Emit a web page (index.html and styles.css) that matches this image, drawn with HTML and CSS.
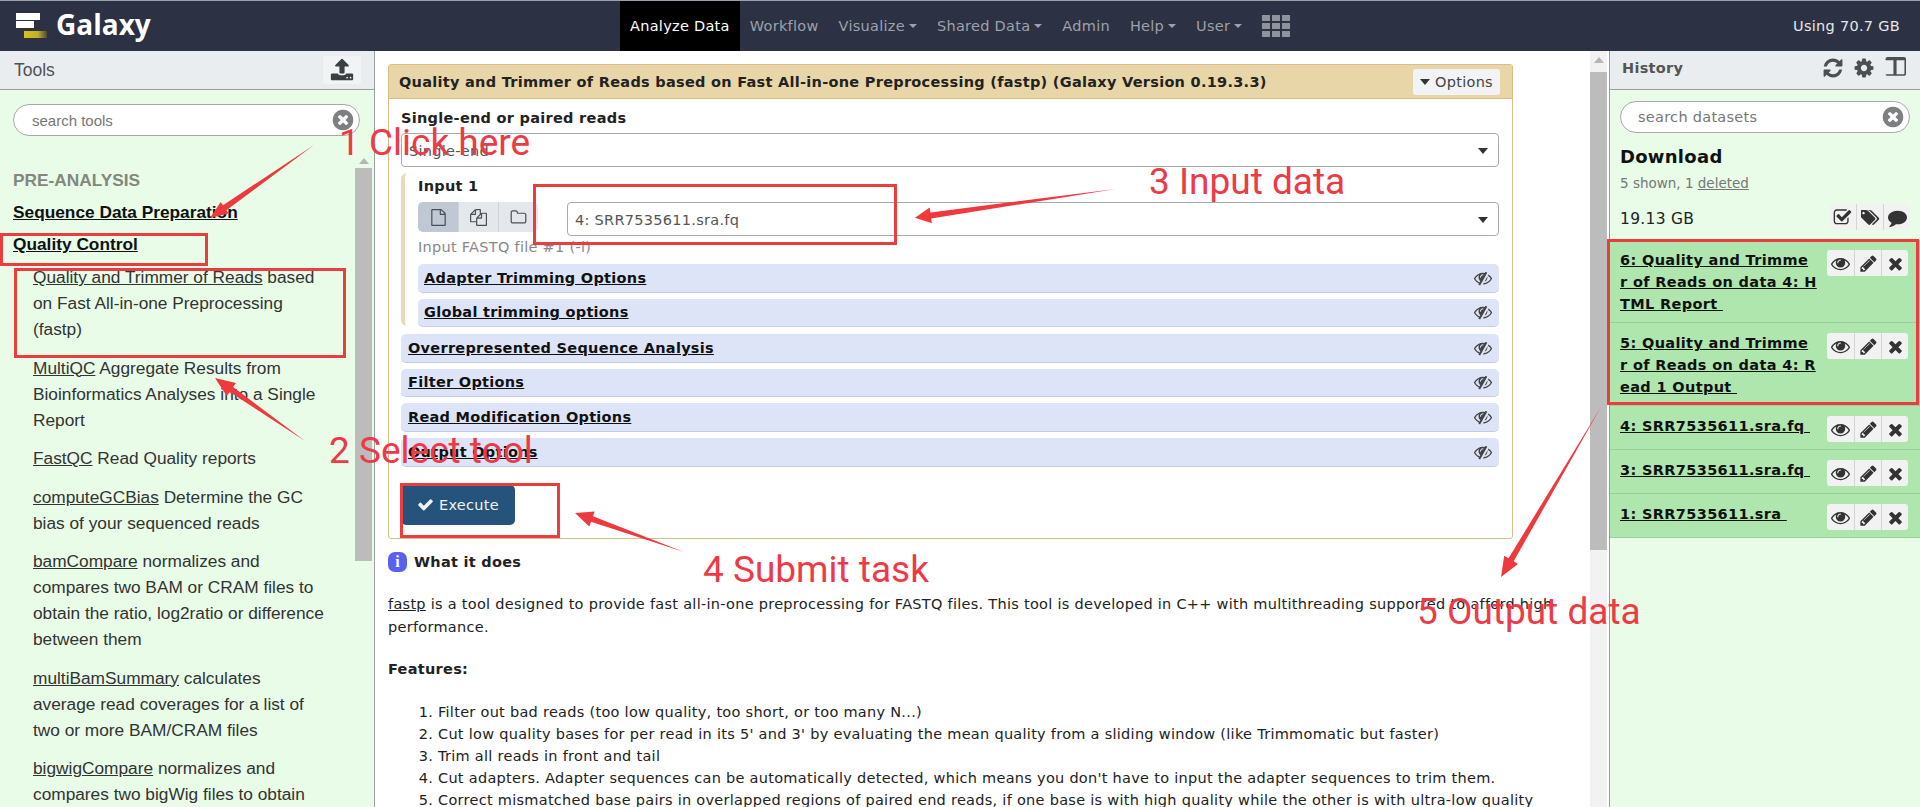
FILE: index.html
```html
<!DOCTYPE html>
<html lang="en">
<head>
<meta charset="utf-8">
<title>Galaxy</title>
<link rel="stylesheet" href="styles.css">
</head>
<body>
<svg class="sprite" width="0" height="0">
  <defs>
    <linearGradient id="gold-fade" x1="0" x2="1" y1="0" y2="0"><stop offset="0" stop-color="#d8c21c"/><stop offset="0.6" stop-color="#c2ae2a"/><stop offset="1" stop-color="#4a4a3a"/></linearGradient>
    <symbol id="i-times" viewBox="0 0 1792 1792"><path d="M1490 1322q0 40-28 68l-136 136q-28 28-68 28t-68-28l-294-294-294 294q-28 28-68 28t-68-28l-136-136q-28-28-28-68t28-68l294-294-294-294q-28-28-28-68t28-68l136-136q28-28 68-28t68 28l294 294 294-294q28-28 68-28t68 28l136 136q28 28 28 68t-28 68l-294 294 294 294q28 28 28 68z"/></symbol>
    <symbol id="i-check" viewBox="0 0 1792 1792"><path d="M1671 566q0 40-28 68l-724 724-136 136q-28 28-68 28t-68-28l-136-136-362-362q-28-28-28-68t28-68l136-136q28-28 68-28t68 28l294 295 656-657q28-28 68-28t68 28l136 136q28 28 28 68z"/></symbol>
    <symbol id="i-pencil" viewBox="0 0 1792 1792"><path d="M491 1536l91-91-235-235-91 91v107h128v128h107zm523-928q0-22-22-22-10 0-17 7l-542 542q-7 7-7 17 0 22 22 22 10 0 17-7l542-542q7-7 7-17zm-54-192l416 416-832 832h-416v-416zm683 96q0 53-37 90l-166 166-416-416 166-165q36-38 90-38 53 0 91 38l235 234q37 39 37 91z"/></symbol>
    <symbol id="i-eye" viewBox="0 0 1792 1792"><path d="M1664 960q-152-236-381-353 61 104 61 225 0 185-131.500 316.500t-316.500 131.500-316.500-131.500-131.500-316.500q0-121 61-225-229 117-381 353 133 205 333.500 326.500t434.500 121.500 434.500-121.500 333.500-326.500zm-720-384q0-20-14-34t-34-14q-125 0-214.500 89.500t-89.500 214.500q0 20 14 34t34 14 34-14 14-34q0-86 61-147t147-61q20 0 34-14t14-34zm848 384q0 34-20 69-140 230-376.500 368.500t-499.500 138.500-499.500-139-376.500-368q-20-35-20-69t20-69q140-229 376.500-368t499.500-139 499.500 139 376.500 368q20 35 20 69z"/></symbol>
    <symbol id="i-eye-slash" viewBox="0 0 1792 1792"><path d="M555 1335l78-141q-87-63-136-159t-49-203q0-121 61-225-229 117-381 353 167 258 427 375zm389-759q0-20-14-34t-34-14q-125 0-214.500 89.500t-89.500 214.500q0 20 14 34t34 14 34-14 14-34q0-86 61-147t147-61q20 0 34-14t14-34zm363-191q0 7-1 9-106 189-316 567t-315 566l-49 89q-10 16-28 16-12 0-134-70-16-10-16-28 0-12 44-87-143-65-263.500-173t-208.500-245q-20-31-20-69t20-69q153-235 380-371t496-136q89 0 180 17l54-97q10-16 28-16 5 0 18 6t31 15.500 33 18.500 31.500 18.500 19.500 11.500q16 10 16 27zm37 447q0 139-79 253.500t-209 164.500l280-502q8 45 8 84zm448 128q0 35-20 69-39 64-109 145-150 172-347.500 267t-419.500 95l74-132q212-18 392.500-137t301.500-307q-115-179-282-294l63-112q95 64 182.500 153t144.500 184q20 34 20 69z"/></symbol>
    <symbol id="i-cog" viewBox="0 0 1792 1792"><path d="M1152 896q0-106-75-181t-181-75-181 75-75 181 75 181 181 75 181-75 75-181zm512-109v222q0 12-8 23t-20 13l-185 28q-19 54-39 91 35 50 107 138 10 12 10 25t-9 23q-27 37-99 108t-94 71q-12 0-26-9l-138-108q-44 23-91 38-16 136-29 186-7 28-36 28h-222q-14 0-24.500-8.500t-11.500-21.500l-28-184q-49-16-90-37l-141 107q-10 9-25 9-14 0-25-11-126-114-165-168-7-10-7-23 0-12 8-23 15-21 51-66.500t54-70.500q-27-50-41-99l-183-27q-13-2-21-12.500t-8-23.500v-222q0-12 8-23t19-13l186-28q14-46 39-92-40-57-107-138-10-12-10-24 0-10 9-23 26-36 98.500-107.500t94.500-71.500q13 0 26 10l138 107q44-23 91-38 16-136 29-186 7-28 36-28h222q14 0 24.500 8.500t11.500 21.500l28 184q49 16 90 37l142-107q9-9 24-9 13 0 25 10 129 119 165 170 7 8 7 22 0 12-8 23-15 21-51 66.500t-54 70.500q26 50 41 98l183 28q13 2 21 12.500t8 23.500z"/></symbol>
    <symbol id="i-refresh" viewBox="0 0 1792 1792"><path d="M1639 1056q0 5-1 7-64 268-268 434.500t-478 166.500q-146 0-282.500-55t-243.500-157l-129 129q-19 19-45 19t-45-19-19-45v-448q0-26 19-45t45-19h448q26 0 45 19t19 45-19 45l-137 137q71 66 161 102t187 36q134 0 250-65t186-179q11-17 53-117 8-23 30-23h192q13 0 22.500 9.500t9.500 22.500zm25-800v448q0 26-19 45t-45 19h-448q-26 0-45-19t-19-45 19-45l138-138q-148-137-349-137-134 0-250 65t-186 179q-11 17-53 117-8 23-30 23h-199q-13 0-22.500-9.500t-9.500-22.500v-7q65-268 270-434.500t480-166.500q146 0 284 55.500t245 156.500l130-129q19-19 45-19t45 19 19 45z"/></symbol>
    <symbol id="i-comment" viewBox="0 0 1792 1792"><path d="M1792 896q0 174-120 321.500t-326 233-450 85.500q-70 0-145-8-198 175-460 242-49 14-114 22-17 2-30.500-9t-17.500-29v-1q-3-4-.5-12t2-10 4.500-9.500l6-9 7-8.500 8-9q7-8 31-34.500t34.500-38 31-39.500 32.500-51 27-59 26-76q-157-89-247.500-220t-90.500-281q0-130 71-248.500t191-204.500 286-136.500 348-50.500q244 0 450 85.500t326 233 120 321.500z"/></symbol>
    <symbol id="i-tags" viewBox="0 0 1920 1792"><path d="M384 448q0-53-37.500-90.500t-90.500-37.500-90.500 37.500-37.500 90.500 37.500 90.500 90.500 37.500 90.500-37.500 37.500-90.500zm1067 576q0 53-37 90l-491 492q-39 37-91 37-53 0-90-37l-715-716q-38-37-64.500-101t-26.500-117v-416q0-52 38-90t90-38h416q53 0 117 26.500t102 64.500l715 714q37 39 37 91zm384 0q0 53-37 90l-491 492q-39 37-91 37-36 0-59-14t-53-45l470-470q37-37 37-90 0-52-37-91l-715-714q-38-38-102-64.500t-117-26.500h224q53 0 117 26.500t102 64.500l715 714q37 39 37 91z"/></symbol>
    <symbol id="i-check-square" viewBox="0 0 1792 1792"><path d="M1472 930v318q0 119-84.500 203.500t-203.500 84.500h-832q-119 0-203.500-84.500t-84.500-203.500v-832q0-119 84.500-203.500t203.500-84.500h832q63 0 117 25 15 7 18 23 3 17-9 29l-49 49q-10 10-23 10-3 0-9-2-23-6-45-6h-832q-66 0-113 47t-47 113v832q0 66 47 113t113 47h832q66 0 113-47t47-113v-254q0-13 9-22l64-64q10-10 23-10 6 0 12 3 20 8 20 29zm231-489l-814 814q-24 24-57 24t-57-24l-430-430q-24-24-24-57t24-57l110-110q24-24 57-24t57 24l263 263 647-647q24-24 57-24t57 24l110 110q24 24 24 57t-24 57z"/></symbol>
    <symbol id="i-file" viewBox="0 0 1792 1792"><path d="M1596 380q28 28 48 76t20 88v1152q0 40-28 68t-68 28h-1344q-40 0-68-28t-28-68v-1600q0-40 28-68t68-28h896q40 0 88 20t76 48zm-444-244v376h376q-10-29-22-41l-313-313q-12-12-41-22zm384 1528v-1024h-416q-40 0-68-28t-28-68v-416h-768v1536h1280z"/></symbol>
    <symbol id="i-files" viewBox="0 0 1792 1792"><path d="M1696 384q40 0 68 28t28 68v1216q0 40-28 68t-68 28h-960q-40 0-68-28t-28-68v-288h-544q-40 0-68-28t-28-68v-672q0-40 20-88t48-76l408-408q28-28 76-48t88-20h416q40 0 68 28t28 68v328q68-40 128-40h416zm-544 213l-299 299h299v-299zm-640-384l-299 299h299v-299zm196 647l316-316v-416h-384v416q0 40-28 68t-68 28h-416v640h512v-256q0-40 20-88t48-76zm956 804v-1152h-384v416q0 40-28 68t-68 28h-416v640h896z"/></symbol>
    <symbol id="i-folder" viewBox="0 0 1792 1792"><path d="M1600 1312v-704q0-40-28-68t-68-28h-704q-40 0-68-28t-28-68v-64q0-40-28-68t-68-28h-320q-40 0-68 28t-28 68v960q0 40 28 68t68 28h1216q40 0 68-28t28-68zm128-704v704q0 92-66 158t-158 66h-1216q-92 0-158-66t-66-158v-960q0-92 66-158t158-66h320q92 0 158 66t66 158v32h672q92 0 158 66t66 158z"/></symbol>
    <symbol id="i-columns" viewBox="0 0 1792 1792"><path d="M160 1408h608v-1152h-640v1120q0 13 9.500 22.500t22.500 9.500zm1504-32v-1120h-640v1152h608q13 0 22.500-9.500t9.500-22.500zm128-1216v1216q0 66-47 113t-113 47h-1344q-66 0-113-47t-47-113v-1216q0-66 47-113t113-47h1344q66 0 113 47t47 113z"/></symbol>
    <symbol id="i-upload" viewBox="0 0 1792 1792"><path d="M1344 1472q0-26-19-45t-45-19-45 19-19 45 19 45 45 19 45-19 19-45zm256 0q0-26-19-45t-45-19-45 19-19 45 19 45 45 19 45-19 19-45zm128-224v320q0 40-28 68t-68 28h-1472q-40 0-68-28t-28-68v-320q0-40 28-68t68-28h427q21 56 70.500 92t110.500 36h256q61 0 110.500-36t70.500-92h427q40 0 68 28t28 68zm-325-648q-17 40-59 40h-256v448q0 26-19 45t-45 19h-256q-26 0-45-19t-19-45v-448h-256q-42 0-59-40-17-39 14-69l448-448q18-19 45-19t45 19l448 448q31 30 14 69z"/></symbol>
    <symbol id="i-clear" viewBox="0 0 1792 1792"><path d="M1277 1122q0-26-19-45l-181-181 181-181q19-19 19-45 0-27-19-46l-90-90q-19-19-46-19-26 0-45 19l-181 181-181-181q-19-19-45-19-27 0-46 19l-90 90q-19 19-19 46 0 26 19 45l181 181-181 181q-19 19-19 45 0 27 19 46l90 90q19 19 46 19 26 0 45-19l181-181 181 181q19 19 45 19 27 0 46-19l90-90q19-19 19-46zm387-226q0 209-103 385.500t-279.500 279.500-385.500 103-385.500-103-279.500-279.500-103-385.500 103-385.500 279.500-279.500 385.500-103 385.500 103 279.500 279.500 103 385.500z"/></symbol>
  </defs>
</svg>

<header class="masthead">
  <div class="brand">
    <svg class="logo" viewBox="0 0 32 26" width="32" height="26">
      <rect class="logo-white" x="0" y="0" width="24" height="7"/>
      <rect class="logo-white" x="0" y="8" width="18" height="7"/>
      <rect class="logo-gold" x="8" y="18" width="23" height="7"/>
    </svg>
    <span class="brand-name">Galaxy</span>
  </div>
  <nav class="nav">
    <a class="nav-item active">Analyze Data</a>
    <a class="nav-item">Workflow</a>
    <a class="nav-item caret">Visualize</a>
    <a class="nav-item caret">Shared Data</a>
    <a class="nav-item">Admin</a>
    <a class="nav-item caret">Help</a>
    <a class="nav-item caret">User</a>
    <a class="nav-item grid-item"><span class="apps"><i></i><i></i><i></i><i></i><i></i><i></i><i></i><i></i><i></i></span></a>
  </nav>
  <div class="quota">Using 70.7 GB</div>
</header>

<main class="layout">
  <aside class="tools">
    <div class="panel-head tools-head">
      <span class="tools-title">Tools</span>
      <span class="upload-btn"><svg class="ic"><use href="#i-upload"/></svg></span>
    </div>
    <div class="tools-body">
      <div class="tools-search">
        <div class="search-box"><span>search tools</span><svg class="clear"><use href="#i-clear"/></svg></div>
      </div>
      <div class="tools-scroll">
        <div class="tools-list">
          <div class="section-title">PRE-ANALYSIS</div>
          <a class="cat">Sequence Data Preparation</a>
          <a class="cat">Quality Control</a>
          <div class="tool"><a>Quality and Trimmer of Reads</a> based on Fast All-in-one Preprocessing (fastp)</div>
          <div class="tool"><a>MultiQC</a> Aggregate Results from Bioinformatics Analyses into a Single Report</div>
          <div class="tool"><a>FastQC</a> Read Quality reports</div>
          <div class="tool"><a>computeGCBias</a> Determine the GC bias of your sequenced reads</div>
          <div class="tool"><a>bamCompare</a> normalizes and compares two BAM or CRAM files to obtain the ratio, log2ratio or difference between them</div>
          <div class="tool"><a>multiBamSummary</a> calculates average read coverages for a list of two or more BAM/CRAM files</div>
          <div class="tool"><a>bigwigCompare</a> normalizes and compares two bigWig files to obtain</div>
        </div>
        <div class="scrollbar tools-bar"><b class="thumb"></b></div>
      </div>
    </div>
  </aside>

  <section class="center">
    <div class="center-scroll">
      <div class="form">
        <div class="form-head">
          <span>Quality and Trimmer of Reads based on Fast All-in-one Preprocessing (fastp) (Galaxy Version 0.19.3.3)</span>
          <span class="options"><i class="tri"></i>Options</span>
        </div>
        <div class="form-body">
          <div class="field-label">Single-end or paired reads</div>
          <div class="select"><span>Single-end</span><i class="tri dark"></i></div>
          <div class="repeat">
            <div class="field-label input-label">Input 1</div>
            <div class="input-row">
              <div class="src-group">
                <span class="src on"><svg class="ic"><use href="#i-file"/></svg></span>
                <span class="src"><svg class="ic"><use href="#i-files"/></svg></span>
                <span class="src"><svg class="ic"><use href="#i-folder"/></svg></span>
              </div>
              <div class="select grow"><span>4: SRR7535611.sra.fq</span><i class="tri dark"></i></div>
            </div>
            <div class="help">Input FASTQ file #1 (-l)</div>
            <div class="sec"><a>Adapter Trimming Options</a><svg class="ic"><use href="#i-eye-slash"/></svg></div>
            <div class="sec"><a>Global trimming options</a><svg class="ic"><use href="#i-eye-slash"/></svg></div>
          </div>
          <div class="sec"><a>Overrepresented Sequence Analysis</a><svg class="ic"><use href="#i-eye-slash"/></svg></div>
          <div class="sec"><a>Filter Options</a><svg class="ic"><use href="#i-eye-slash"/></svg></div>
          <div class="sec"><a>Read Modification Options</a><svg class="ic"><use href="#i-eye-slash"/></svg></div>
          <div class="sec"><a>Output Options</a><svg class="ic"><use href="#i-eye-slash"/></svg></div>
          <div class="execute"><svg class="ic"><use href="#i-check"/></svg>Execute</div>
        </div>
      </div>
      <div class="doc">
        <div class="doc-title"><span class="info">i</span><strong>What it does</strong></div>
        <p class="doc-p"><a>fastp</a> is a tool designed to provide fast all-in-one preprocessing for FASTQ files. This tool is developed in C++ with multithreading supported to afford high performance.</p>
        <p class="doc-h"><strong>Features:</strong></p>
        <ol class="doc-list">
          <li>Filter out bad reads (too low quality, too short, or too many N...)</li>
          <li>Cut low quality bases for per read in its 5' and 3' by evaluating the mean quality from a sliding window (like Trimmomatic but faster)</li>
          <li>Trim all reads in front and tail</li>
          <li>Cut adapters. Adapter sequences can be automatically detected, which means you don't have to input the adapter sequences to trim them.</li>
          <li>Correct mismatched base pairs in overlapped regions of paired end reads, if one base is with high quality while the other is with ultra-low quality</li>
        </ol>
      </div>
    </div>
    <div class="scrollbar center-bar"><b class="thumb"></b></div>
  </section>

  <aside class="history">
    <div class="panel-head history-head">
      <span class="history-title">History</span>
      <span class="head-icons">
        <svg class="ic"><use href="#i-refresh"/></svg>
        <svg class="ic"><use href="#i-cog"/></svg>
        <svg class="ic"><use href="#i-columns"/></svg>
      </span>
    </div>
    <div class="history-body">
      <div class="hist-pad">
        <div class="search-box hist-search"><span>search datasets</span><svg class="clear"><use href="#i-clear"/></svg></div>
        <div class="hist-name">Download</div>
        <div class="hist-count">5 shown, 1 <a>deleted</a></div>
        <div class="hist-size">
          <span class="size-text">19.13 GB</span>
          <span class="btns small">
            <span><svg class="ic"><use href="#i-check-square"/></svg></span>
            <span><svg class="ic"><use href="#i-tags"/></svg></span>
            <span><svg class="ic"><use href="#i-comment"/></svg></span>
          </span>
        </div>
      </div>
      <div class="datasets">
        <div class="ds"><a class="ds-title">6: Quality and Trimme<br>r of Reads on data 4: H<br>TML Report&nbsp;</a><span class="btns"><span><svg class="ic"><use href="#i-eye"/></svg></span><span><svg class="ic"><use href="#i-pencil"/></svg></span><span><svg class="ic"><use href="#i-times"/></svg></span></span></div>
        <div class="ds"><a class="ds-title">5: Quality and Trimme<br>r of Reads on data 4: R<br>ead 1 Output&nbsp;</a><span class="btns"><span><svg class="ic"><use href="#i-eye"/></svg></span><span><svg class="ic"><use href="#i-pencil"/></svg></span><span><svg class="ic"><use href="#i-times"/></svg></span></span></div>
        <div class="ds"><a class="ds-title">4: SRR7535611.sra.fq&nbsp;</a><span class="btns"><span><svg class="ic"><use href="#i-eye"/></svg></span><span><svg class="ic"><use href="#i-pencil"/></svg></span><span><svg class="ic"><use href="#i-times"/></svg></span></span></div>
        <div class="ds"><a class="ds-title">3: SRR7535611.sra.fq&nbsp;</a><span class="btns"><span><svg class="ic"><use href="#i-eye"/></svg></span><span><svg class="ic"><use href="#i-pencil"/></svg></span><span><svg class="ic"><use href="#i-times"/></svg></span></span></div>
        <div class="ds"><a class="ds-title">1: SRR7535611.sra&nbsp;</a><span class="btns"><span><svg class="ic"><use href="#i-eye"/></svg></span><span><svg class="ic"><use href="#i-pencil"/></svg></span><span><svg class="ic"><use href="#i-times"/></svg></span></span></div>
      </div>
    </div>
  </aside>
</main>

<div class="overlay">
  <svg class="arrows" width="1920" height="807" viewBox="0 0 1920 807">
    <polygon points="314,145 226.400,210.200 228.700,213.400 210,218 220.700,202 223,205.200"/>
    <polygon points="305,441 233.100,387 236,383 215,378 226.800,396 229.700,392"/>
    <polygon points="1115.600,189 931.200,218.400 931.900,223.300 915,217.700 929.700,207.500 930.400,212.400"/>
    <polygon points="684,552 591,521.800 589.300,526.500 575,513 594.700,511.500 593,516.200"/>
    <polygon points="1601,407 1513.700,561.300 1518,563.900 1501,577 1504.200,555.700 1508.500,558.300"/>
  </svg>
  <div class="mark m1"></div>
  <div class="mark m2"></div>
  <div class="mark m3"></div>
  <div class="mark m4"></div>
  <div class="mark m5"></div>
  <div class="note n1">1 Click here</div>
  <div class="note n2">2 Select tool</div>
  <div class="note n3">3 Input data</div>
  <div class="note n4">4 Submit task</div>
  <div class="note n5">5 Output data</div>
</div>
</body>
</html>
```

FILE: styles.css
```css
* { box-sizing: border-box; }
html, body { margin: 0; height: 100%; overflow: hidden; background: #fff; }
body { font-family: "DejaVu Sans", Verdana, sans-serif; font-size: 14.500px; letter-spacing: 0.280px; color: #1b1b1b; display: flex; flex-direction: column; position: relative; }
a { text-decoration: underline; color: inherit; }
.sprite { position: absolute; }
.ic { display: block; width: 17px; height: 17px; fill: currentColor; flex: none; }

.masthead { height: 51px; flex: none; background: #2c3143; border-top: 1px solid #9aa0ac; display: flex; align-items: stretch; }
.brand { width: 620px; flex: none; display: flex; align-items: center; padding-left: 16px; gap: 8px; }
.logo { display: block; margin-top: 0; }
.logo-white { fill: #fff; }
.logo-gold { fill: url(#gold-fade); }
.brand-name { font: bold 28px "Open Sans", "DejaVu Sans", sans-serif; letter-spacing: 0; color: #fff; position: relative; top: -2px; }
.nav { display: flex; align-items: stretch; }
.nav-item { display: flex; align-items: center; padding: 0 10px; color: #9da1ad; text-decoration: none; }
.nav-item.active { background: #000; color: #fff; }
.nav-item.caret::after { content: ""; margin-left: 4px; border: 4px solid transparent; border-top-color: #9da1ad; border-bottom: 0; }
.apps { display: grid; grid-template-columns: repeat(3, 8px); gap: 2px; }
.apps i { height: 6px; background: #8f939e; }
.grid-item { padding: 0 10px; }
.quota { margin-left: auto; padding-right: 20px; align-self: center; color: #e6e7ea; }

.layout { flex: 1; display: flex; min-height: 0; }
.panel-head { height: 39px; background: #e9edf0; border-bottom: 1px solid #9a9fa3; display: flex; align-items: center; justify-content: space-between; flex: none; }

.tools { width: 375px; flex: none; display: flex; flex-direction: column; border-right: 1px solid #9a9fa3; }
.tools-head { padding: 0 13px 0 14px; }
.tools-title { font: 17.500px "Liberation Sans", Arial, sans-serif; letter-spacing: 0; color: #4e5256; }
.upload-btn { width: 38px; height: 28px; background: #f1f3f5; border-radius: 3px; display: flex; align-items: center; justify-content: center; color: #3a3f44; }
.upload-btn .ic { width: 24px; height: 24px; }
.tools-body { flex: 1; min-height: 0; background: #e8fce8; display: flex; flex-direction: column; }
.tools-search { padding: 14px 14px 0 13px; flex: none; }
.search-box { height: 32px; border: 1px solid #a6aaa8; border-radius: 16px; background: #fff; display: flex; align-items: center; justify-content: space-between; padding: 0 6px 0 18px; color: #777; }
.tools-search .search-box { font: 15px "Liberation Sans", Arial, sans-serif; letter-spacing: 0; }
.clear { width: 24px; height: 24px; fill: #7d7f80; flex: none; margin-right: -2px; }
.tools-scroll { flex: 1; min-height: 0; display: flex; overflow: hidden; }
.tools-list { flex: 1; min-width: 0; padding: 31px 0 0 13px; font: 17.300px/26px "Liberation Sans", Arial, sans-serif; letter-spacing: 0; color: #333; }
.section-title { font-weight: bold; color: #83877f; line-height: 26px; }
.cat { display: block; font-weight: bold; color: #111; margin-top: 6px; }
.tool { margin: 12.500px 0 0 20px; width: 293.500px; }
.cat + .tool { margin-top: 7px; }
.scrollbar { flex: none; width: 17px; display: flex; flex-direction: column; position: relative; }
.scrollbar::before { content: ""; position: absolute; left: 4px; top: 6px; border: 5px solid transparent; border-top: 0; border-bottom: 6px solid #b5b5b5; }
.thumb { display: block; background: #bcbcbc; width: 17px; }
.tools-bar { margin-right: 2px; margin-top: 16px; padding-top: 16px; }
.tools-bar .thumb { height: 393px; }

.center { flex: 1; min-width: 0; display: flex; }
.center-scroll { flex: 1; min-width: 0; overflow: hidden; padding: 13px 0 0 13px; }
.center-bar { background: #f2f2f2; width: 17px; margin-right: 2px; padding-top: 21px; }
.center-bar .thumb { height: 478px; }

.form { width: 1125px; border: 1px solid #d8bf85; border-radius: 3px; height: 475px; }
.form-head { height: 34px; background: #e8d6a8; border-bottom: 1px solid #d8bf85; display: flex; align-items: center; justify-content: space-between; padding: 0 12px 0 10px; font-weight: bold; color: #222; }
.options { width: 87px; height: 26px; background: #f2f3f4; border-radius: 3px; font-weight: normal; display: flex; align-items: center; justify-content: center; gap: 5px; color: #444; }
.tri { display: block; border: 5px solid transparent; border-top: 6px solid #333; border-bottom: 0; flex: none; }
.form-body { padding: 10px 13px 0 12px; }
.field-label { font-weight: bold; line-height: 18px; color: #222; padding-bottom: 6px; }
.select { height: 34px; border: 1px solid #aaa; border-radius: 4px; background: #fff; display: flex; align-items: center; justify-content: space-between; padding: 2px 10px 0 7px; color: #555; }
.grow { flex: 1; }
.repeat { margin-top: 6px; border-left: 4px solid #e8dcb8; border-radius: 6px 0 0 6px; padding: 4px 0 0 13px; height: 153px; }
.input-label { padding-bottom: 7px; }
.input-row { display: flex; gap: 29px; height: 34px; align-items: flex-start; }
.src-group { display: flex; height: 30px; border-radius: 5px; overflow: hidden; }
.src { width: 40px; background: #e4e8ec; border-left: 1px solid #cdd3d8; display: flex; align-items: center; justify-content: center; color: #4a5058; }
.src.on { background: #bfc8d3; border-left: 0; }
.help { color: #888; line-height: 18px; margin: 2px 0 8px; }
.sec { height: 28.500px; margin-bottom: 6.200px; background: #dee4f7; border-bottom: 1px solid #c4cce0; border-radius: 5px; display: flex; align-items: center; justify-content: space-between; padding: 0 7px 0 7px; font-weight: bold; color: #111; }
.sec .ic { color: #444; width: 18px; height: 18px; }
.repeat .sec { padding-left: 6px; }
.repeat + .sec { margin-top: 8px; }
.execute { margin-top: 18px; width: 114px; height: 40px; background: #25537b; color: #f2f2f2; border-radius: 5px; display: flex; align-items: center; gap: 5px; padding-left: 16px; }

.doc { color: #222; }
.doc-title { display: flex; align-items: center; gap: 7px; margin-top: 11px; height: 24px; }
.info { width: 19px; height: 20px; border-radius: 7px; background: #5b60f0; color: #fff; font: bold 16px "Liberation Serif", serif; display: flex; align-items: center; justify-content: center; }
.doc-p { margin: 19px 0 0; line-height: 23px; width: 1182px; }
.doc-h { margin: 19px 0 0; line-height: 23px; }
.doc-list { margin: 20px 0 0; padding: 0 0 0 50px; line-height: 22px; white-space: nowrap; }

.history { width: 311px; flex: none; display: flex; flex-direction: column; border-left: 1px solid #8fa08f; }
.history-head { padding: 0 14px 4px 12px; }
.history-title { font-weight: bold; color: #555; }
.head-icons { display: flex; gap: 9px; color: #4b4f52; }
.head-icons .ic { width: 22px; height: 22px; }
.history-body { flex: 1; background: #e8fce8; }
.hist-pad { padding: 11px 10px 0 10px; }
.hist-search { padding-left: 17px; }
.hist-name { font-weight: bold; font-size: 18px; line-height: 22px; margin-top: 13px; color: #111; }
.hist-count { color: #777; font-size: 13.500px; letter-spacing: 0; line-height: 18px; margin-top: 6px; }
.hist-size { display: flex; align-items: center; justify-content: space-between; height: 26px; margin-top: 12px; font-size: 15.500px; color: #222; }
.size-text { padding-top: 3px; }
.btns { display: flex; flex: none; }
.btns > span { width: 27px; height: 26px; background: #f2f2f2; border-left: 1px solid #d4d4d4; display: flex; align-items: center; justify-content: center; color: #333; }
.btns > span:first-child { border-left: 0; border-radius: 3px 0 0 3px; }
.btns > span:last-child { border-radius: 0 3px 3px 0; }
.btns .ic { width: 19px; height: 19px; }
.datasets { margin-top: 10px; }
.ds { background: #afe6ae; border-bottom: 1px solid #9ccf9c; display: flex; justify-content: space-between; padding: 9px 12px 7px 10px; align-items: flex-start; }
.ds-title { font-weight: bold; font-size: 14.500px; letter-spacing: 0.350px; line-height: 22px; white-space: nowrap; color: #111; }
.ds .btns { margin-top: 1px; }

.overlay { position: absolute; left: 0; top: 0; width: 1920px; height: 807px; pointer-events: none; overflow: hidden; }
.arrows { position: absolute; left: 0; top: 0; fill: #ee3a3f; }
.mark { position: absolute; border: 3px solid #e93d40; }
.m1 { left: 0; top: 233px; width: 208px; height: 33px; }
.m2 { left: 14px; top: 268px; width: 332px; height: 90px; }
.m3 { left: 533px; top: 184px; width: 364px; height: 61px; }
.m4 { left: 400px; top: 483px; width: 160px; height: 55px; }
.m5 { left: 1607px; top: 239px; width: 312px; height: 166px; }
.note { position: absolute; font: 400 37px/44px Roboto, "Noto Sans", sans-serif; letter-spacing: 0; color: #ee3a46; white-space: nowrap; }
.n1 { left: 339px; top: 121px; }
.n2 { left: 329px; top: 429px; }
.n3 { left: 1149px; top: 160px; }
.n4 { left: 703px; top: 548px; }
.n5 { left: 1417px; top: 590px; }
```
